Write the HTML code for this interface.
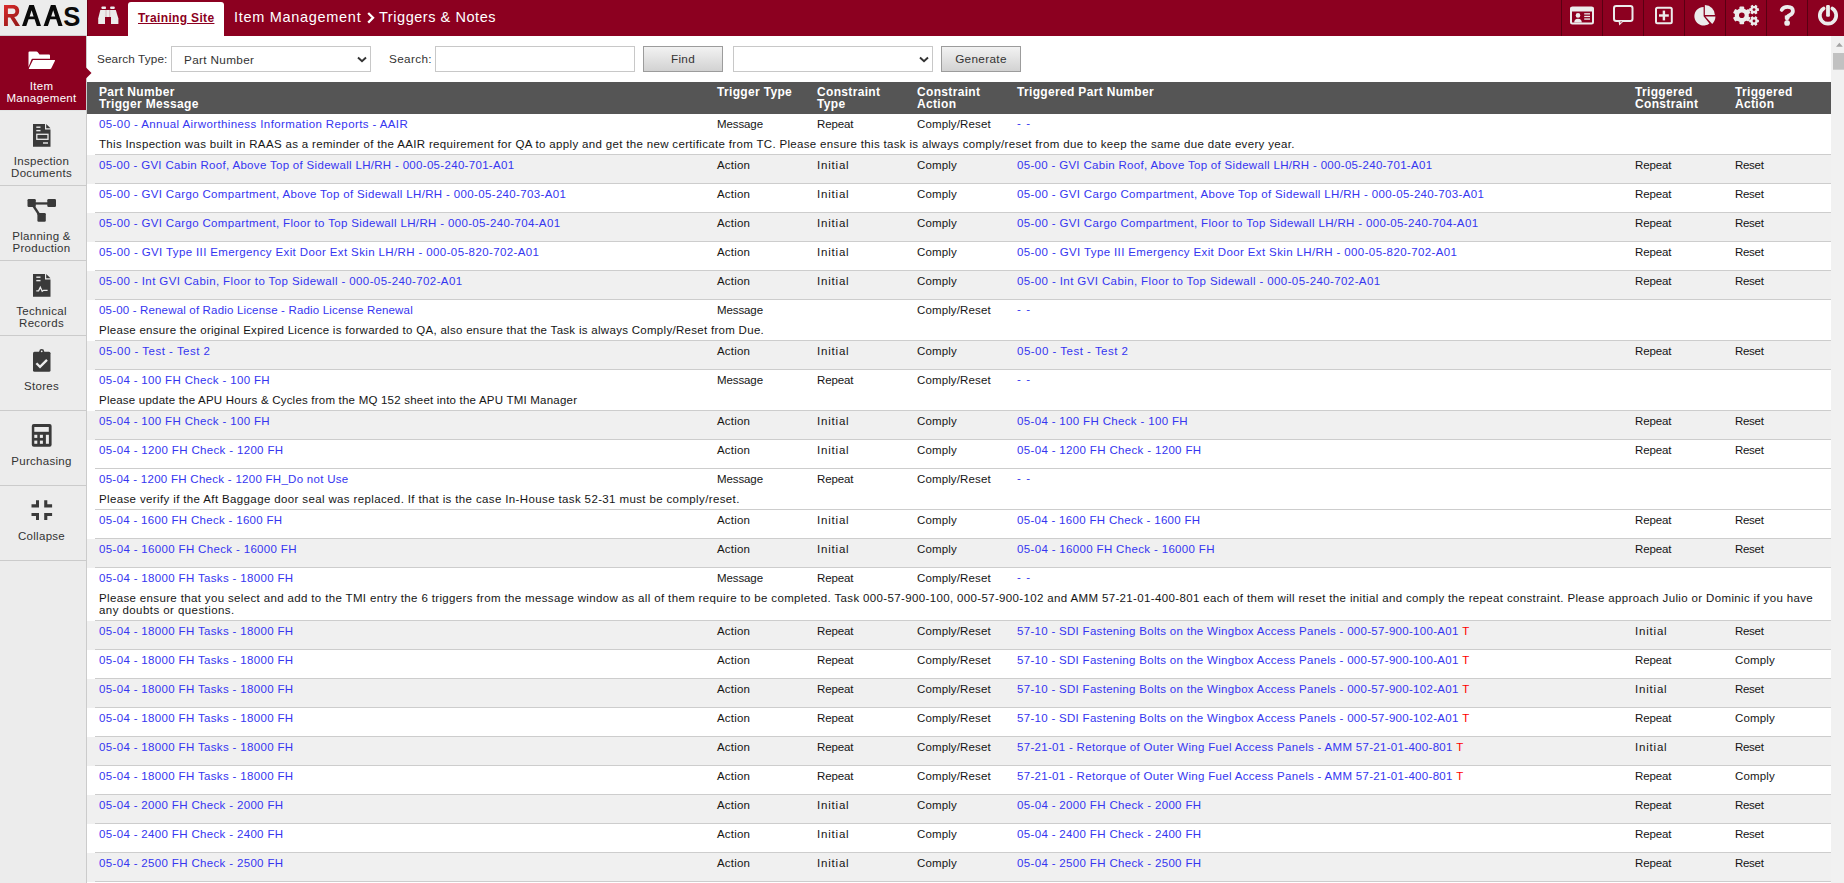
<!DOCTYPE html>
<html><head><meta charset="utf-8"><title>RAAS</title>
<style>
*{box-sizing:border-box;margin:0;padding:0}
html,body{width:1844px;height:883px;overflow:hidden}
body{position:relative;font-family:"Liberation Sans",sans-serif;font-size:11.5px;letter-spacing:0.34px;color:#333;background:#fff}
.hdr{position:absolute;left:0;top:0;width:1844px;height:36px;background:#8c0020}
.logo{position:absolute;left:0;top:0;width:87px;height:36px;background:#ececec;border-bottom:1px solid #cfcfcf}
.tab{position:absolute;left:128px;top:2px;width:96px;height:34px;background:#fff;border-radius:3px 3px 0 0}
.tab span{position:absolute;left:10px;top:9px;font-weight:bold;font-size:12px;color:#8c0020;text-decoration:underline;white-space:nowrap;line-height:14px}
.title{position:absolute;left:234px;top:8px;color:#fff;font-size:14.5px;letter-spacing:0.7px;white-space:nowrap;line-height:18px}
.sep{position:absolute;top:0;width:1px;height:36px;background:#5a0012}
.hi{position:absolute;top:0;height:36px}
.side{position:absolute;left:0;top:36px;width:87px;height:847px;background:#ececec;border-right:1px solid #cbcbcb}
.si{position:absolute;left:0;width:86px;height:75px;border-bottom:1px solid #cbcbcb;text-align:center;color:#333;font-size:11.5px;letter-spacing:0.3px;line-height:12px}
.si.act{background:#8c0020;color:#fff;border-bottom:1px solid #e2e4e4}
.si .lbl{position:absolute;left:-1.5px;width:86px;top:44px}
.si svg{position:absolute;left:0;top:0}
.srch{position:absolute;top:36px;left:87px;width:1744px;height:46px}
.lab{position:absolute;top:52px;font-size:11.75px;color:#333;white-space:nowrap;line-height:14px}
.sel{position:absolute;top:46px;height:26px;background:#fff;border:1px solid #c8c8c8}
.sel span{position:absolute;left:12px;top:6px;font-size:11.75px;color:#333;line-height:14px}
.inp{position:absolute;top:46px;height:26px;background:#fff;border:1px solid #c8c8c8}
.btn{position:absolute;top:46px;height:26px;border:1px solid #9c9c9c;background:linear-gradient(#f2f2f2,#d2d2d2);text-align:center;font-size:11.75px;color:#333;line-height:24px}
.scroll{position:absolute;left:1831px;top:36px;width:13px;height:847px;background:#f1f1f1}
.th{position:absolute;left:87px;top:82px;width:1744px;height:32px;background:#555;color:#fff;font-weight:bold;font-size:12px;letter-spacing:0.33px;line-height:12px}
.th span{position:absolute;top:4px;white-space:nowrap}
.h1{left:12px}.h2{left:630px}.h3{left:730px}.h4{left:830px}.h5{left:930px}.h6{left:1548px}.h7{left:1648px}
.row{position:absolute;left:87px;width:1744px;background:#fff;color:#151515}
.row.g{background:#f0f0f0}
.row::after{content:"";position:absolute;left:8px;right:0;bottom:0;height:1px;background:#cdcdcd}
.row>span,.row>a{position:absolute;top:3px;line-height:14px;white-space:nowrap}
a{color:#3535f0;text-decoration:none}
.c1{left:12px}.c2{left:630px}.c3{left:730px}.c4{left:830px}.c5{left:930px}.c6{left:1548px}.c7{left:1648px}
.rt{color:#f00;font-weight:normal;letter-spacing:0}
.msg{position:absolute;left:12px;top:24px;right:14px;line-height:12px;color:#151515;letter-spacing:0.3px}

</style></head><body>
<div class="hdr"></div>
<div class="logo"><svg width="87" height="36" style="position:absolute;left:0;top:0">
<defs><linearGradient id="rg" x1="0" y1="0" x2="0.6" y2="1"><stop offset="0" stop-color="#da2b2b"/><stop offset="1" stop-color="#9a1b1b"/></linearGradient></defs>
<path fill="url(#rg)" fill-rule="evenodd" d="M4,5 H13 C17,5 19.2,7.6 19.2,11 C19.2,14.3 17.3,16.6 14.3,17.1 L20,26 H15.6 L10.2,17.4 H7.9 V26 H4 Z M7.9,8.5 V13.9 H12.9 C14.6,13.9 15.4,12.7 15.4,11.2 C15.4,9.7 14.6,8.5 12.9,8.5 Z"/>
<path fill="#0a0a0a" fill-rule="evenodd" d="M22,26 L29.3,5 H33.9 L41,26 H36.8 L34.6,19.2 H28.6 L26.3,26 Z M29.6,16.4 H33.6 L31.6,10.3 Z"/>
<path fill="#0a0a0a" fill-rule="evenodd" d="M43.6,26 L50.9,5 H55.5 L62.6,26 H58.4 L56.2,19.2 H50.2 L47.9,26 Z M51.2,16.4 H55.2 L53.2,10.3 Z"/>
<text x="63.2" y="26" font-family="Liberation Sans" font-weight="bold" font-size="28.5" fill="#0a0a0a" transform="translate(63.2,26) scale(0.9,1) translate(-63.2,-26)">S</text>
</svg></div>
<svg width="1844" height="36" style="position:absolute;left:0;top:0">
<g fill="#ececec">
<rect x="101.5" y="6.5" width="4.5" height="2.5" rx="0.8"/>
<rect x="110.2" y="6.5" width="4.5" height="2.5" rx="0.8"/>
<path d="M100.3,10 H105 V24 H98.6 Q98.2,24 98.2,23.4 V18.5 Z"/>
<rect x="104.6" y="10" width="6.8" height="7"/>
<path d="M111,10 H115.8 L118.4,18.5 V23.4 Q118.4,24 118,24 H111 Z"/>
</g>
<rect x="105.6" y="10" width="0.8" height="7" fill="#8c0020" opacity="0.3"/><rect x="109.4" y="10" width="0.8" height="7" fill="#8c0020" opacity="0.3"/>
<g fill="#5a0012">
<rect x="87" y="0" width="1" height="36" fill="#6a0014"/><rect x="1561" y="0" width="1" height="36"/><rect x="1602" y="0" width="1" height="36"/><rect x="1643" y="0" width="1" height="36"/><rect x="1684" y="0" width="1" height="36"/><rect x="1725" y="0" width="1" height="36"/><rect x="1766" y="0" width="1" height="36"/><rect x="1807" y="0" width="1" height="36"/>
</g>
<g fill="#ececec" stroke="none">
<!-- id card -->
<rect x="1571" y="7.5" width="22" height="16" rx="1.5" fill="none" stroke="#ececec" stroke-width="2"/>
<rect x="1570.5" y="7" width="23" height="4.6" rx="1"/>
<circle cx="1578" cy="15.4" r="2.3"/>
<path d="M1574.2,22.6 Q1574.2,18.7 1578,18.7 Q1581.8,18.7 1581.8,22.6 Z"/>
<rect x="1584.2" y="13.2" width="5.8" height="1.3"/><rect x="1584.2" y="15.8" width="5.8" height="1.3"/><rect x="1584.2" y="18.4" width="5.8" height="1.3"/>
<!-- chat -->
<rect x="1614" y="6" width="18.5" height="15" rx="2.2" fill="none" stroke="#ececec" stroke-width="2"/>
<path d="M1618.5,20.5 L1619.2,25.6 L1624.5,20.5 Z"/>
<path d="M1620.3,21.5 L1620.6,23 L1622.2,21.5 Z" fill="#8c0020"/>
<!-- plus -->
<rect x="1656" y="7.7" width="15.8" height="15.6" rx="1.5" fill="none" stroke="#ececec" stroke-width="2"/>
<rect x="1662.7" y="10.6" width="2.4" height="9.8"/><rect x="1659" y="14.3" width="9.8" height="2.4"/>
<!-- pie -->
<path d="M1703.6,16.2 V6.9 A9.3,9.3 0 1 0 1709.4,23.5 Z"/>
<path d="M1704.9,15 V5 A10,10 0 0 1 1714.9,15 Z"/>
<path d="M1705.4,16.6 H1715.4 A10,10 0 0 1 1712.2,23.9 Z"/>
<!-- gears -->
<g transform="translate(1741.8,15.3)">
<circle r="7"/>
<rect x="-2.3" y="-8.9" width="4.6" height="17.8" rx="0.8"/>
<rect x="-2.3" y="-8.9" width="4.6" height="17.8" rx="0.8" transform="rotate(60)"/>
<rect x="-2.3" y="-8.9" width="4.6" height="17.8" rx="0.8" transform="rotate(120)"/>
<circle r="2.8" fill="#8c0020"/>
</g>
<g transform="translate(1754,9.6)">
<circle r="3.7"/>
<rect x="-1.3" y="-4.9" width="2.6" height="9.8" rx="0.5" transform="rotate(30)"/>
<rect x="-1.3" y="-4.9" width="2.6" height="9.8" rx="0.5" transform="rotate(90)"/>
<rect x="-1.3" y="-4.9" width="2.6" height="9.8" rx="0.5" transform="rotate(150)"/>
<circle r="1.4" fill="#8c0020"/>
</g>
<g transform="translate(1754,21)">
<circle r="3.7"/>
<rect x="-1.3" y="-4.9" width="2.6" height="9.8" rx="0.5" transform="rotate(30)"/>
<rect x="-1.3" y="-4.9" width="2.6" height="9.8" rx="0.5" transform="rotate(90)"/>
<rect x="-1.3" y="-4.9" width="2.6" height="9.8" rx="0.5" transform="rotate(150)"/>
<circle r="1.4" fill="#8c0020"/>
</g>
<!-- help -->
<path d="M1781.7,9.9 Q1783.3,6.9 1787.5,6.9 Q1792.9,6.9 1792.9,11 Q1792.9,13.6 1790,15 Q1787,16.4 1787,18.8" fill="none" stroke="#ececec" stroke-width="3.8" stroke-linecap="round"/>
<rect x="1784.8" y="15.5" width="4.6" height="3.3"/>
<circle cx="1787.1" cy="23" r="2.85"/>
<!-- power -->
<path d="M1832.35,8.55 A8.2,8.2 0 1 1 1823.65,8.55" fill="none" stroke="#ececec" stroke-width="3.7" stroke-linecap="round"/>
<rect x="1826.1" y="5" width="3.8" height="11.8" rx="1.2"/>
</g>
</svg>
<div class="tab"><span>Training Site</span></div>
<div class="title" style="left:234px">Item Management</div><svg width="10" height="14" style="position:absolute;left:366px;top:11px"><path d="M2.2,2 L7,6.8 L2.2,11.6" fill="none" stroke="#fff" stroke-width="2.3"/></svg><div class="title" style="left:379px;letter-spacing:0.55px">Triggers &amp; Notes</div>

<div class="side">
<div class="si act" style="top:0"><div class="lbl">Item<br>Management</div></div>
<div class="si" style="top:75px"><div class="lbl">Inspection<br>Documents</div></div>
<div class="si" style="top:150px"><div class="lbl">Planning &amp;<br>Production</div></div>
<div class="si" style="top:225px"><div class="lbl">Technical<br>Records</div></div>
<div class="si" style="top:300px"><div class="lbl">Stores</div></div>
<div class="si" style="top:375px"><div class="lbl">Purchasing</div></div>
<div class="si" style="top:450px"><div class="lbl">Collapse</div></div>
</div>
<svg width="92" height="883" style="position:absolute;left:0;top:0">
<g fill="#fff">
<path d="M29.5,51.5 H36.5 Q37.2,51.5 37.6,52 L39.5,54.5 H49 Q50,54.5 50,55.5 V58.8 H32.5 Q31.8,58.8 31.5,59.5 L28.5,67 V52.5 Q28.5,51.5 29.5,51.5 Z"/>
<path d="M33,60 H54.5 Q55.3,60 55,60.8 L51.3,68.3 Q51,69 50.2,69 H29.3 Q28.6,69 28.9,68.3 Z"/>
</g>
<path d="M86,67.5 L91.5,73 L86,78.5 Z" fill="#8c0020"/>
<g fill="#3a3a3a">
<!-- doc -->
<path d="M33,124 H45 V129.5 H50.5 V146.7 H33 Z"/><path d="M46.2,124 L50.5,128.3 H46.2 Z"/>
<!-- sitemap -->
<rect x="27.5" y="199" width="8.3" height="8" rx="1.2"/><rect x="47.3" y="199" width="8.7" height="8" rx="1.2"/><rect x="37.4" y="213" width="8.4" height="8.7" rx="1.2"/>
<rect x="35" y="202.3" width="13" height="2.3"/>
<path d="M33.5,206 L38.8,214" stroke="#3a3a3a" stroke-width="2.3"/>
<!-- tech doc -->
<path d="M33,274 H45 V279.5 H50.5 V296.7 H33 Z"/><path d="M46.2,274 L50.5,278.3 H46.2 Z"/>
<!-- clipboard -->
<rect x="33" y="351.8" width="17.5" height="20" rx="1.5"/>
<circle cx="41.7" cy="351.3" r="2.4"/>
<!-- calc -->
<rect x="31.8" y="424" width="19.8" height="22.7" rx="2"/>
<!-- collapse -->
<path d="M36,500.3 H39 V507.4 H31.5 V504.3 H36 Z"/>
<path d="M44.2,500.3 H47.3 V504.3 H52.1 V507.4 H44.2 Z"/>
<path d="M31.5,513 H39 V520.1 H36 V516.1 H31.5 Z"/>
<path d="M44.2,513 H52.1 V516.1 H47.3 V520.1 H44.2 Z"/>
</g>
<g fill="#ececec">
<rect x="36.3" y="126.5" width="4.2" height="1.4"/><rect x="36.3" y="129.9" width="4.2" height="1.4"/>
<rect x="36.8" y="134.3" width="11.2" height="5" fill="none" stroke="#ececec" stroke-width="1.3"/>
<rect x="43" y="142.3" width="5" height="1.4"/>
<rect x="36.3" y="276.5" width="4.2" height="1.4"/><rect x="36.3" y="279.9" width="4.2" height="1.4"/>
<path d="M36.3,290.8 H38.6 L40.3,287.3 L42.2,291.3 L43.6,290.3 H47.6" fill="none" stroke="#ececec" stroke-width="1.3"/>
<circle cx="41.7" cy="351.3" r="1.1" fill="#3a3a3a"/>
<circle cx="41.7" cy="351.3" r="0.9"/>
<path d="M36.4,363.3 L40,366.9 L47,359.9" fill="none" stroke="#ececec" stroke-width="2.3"/>
<rect x="34.3" y="427" width="14.5" height="4.8"/>
<rect x="34.3" y="434.8" width="3" height="3.1"/><rect x="39.9" y="434.8" width="3" height="3.1"/>
<rect x="34.3" y="440.6" width="3" height="3.2"/><rect x="39.9" y="440.6" width="3" height="3.2"/>
<rect x="45.9" y="434.8" width="3" height="9"/>
</g>
</svg>

<span class="lab" style="left:97px;letter-spacing:0.12px">Search Type:</span>
<div class="sel" style="left:171px;width:200px"><span>Part Number</span><svg width="12" height="10" style="position:absolute;left:184px;top:8px"><path d="M2,2.5 L6,6.3 L10,2.5" fill="none" stroke="#333" stroke-width="1.9"/></svg></div>
<span class="lab" style="left:389px">Search:</span>
<div class="inp" style="left:435px;width:200px"></div>
<div class="btn" style="left:643px;width:80px">Find</div>
<div class="sel" style="left:733px;width:200px"><svg width="12" height="10" style="position:absolute;left:184px;top:8px"><path d="M2,2.5 L6,6.3 L10,2.5" fill="none" stroke="#333" stroke-width="1.9"/></svg></div>
<div class="btn" style="left:941px;width:80px">Generate</div>

<div class="scroll"><svg width="13" height="40" style="position:absolute;left:0;top:0"><path d="M5,10.8 L8.4,6.8 L11.8,10.8 Z" fill="#a3a3a3"/><rect x="2" y="17" width="11" height="16.7" fill="#c1c1c1"/></svg></div>

<div class="tbl">
<div class="th"><span class="h1">Part Number<br>Trigger Message</span><span class="h2">Trigger Type</span><span class="h3">Constraint<br>Type</span><span class="h4">Constraint<br>Action</span><span class="h5">Triggered Part Number</span><span class="h6">Triggered<br>Constraint</span><span class="h7">Triggered<br>Action</span></div>
<div class="row" style="top:114px;height:41px"><a class="c1" style="letter-spacing:0.403px">05-00 - Annual Airworthiness Information Reports - AAIR</a><span class="c2" style="letter-spacing:-0.1px">Message</span><span class="c3" style="letter-spacing:-0.15px">Repeat</span><span class="c4" style="letter-spacing:0.125px">Comply/Reset</span><span class="c5"><a style="letter-spacing:1.1px;position:relative;top:-0.8px">- -</a></span><span class="c6"></span><span class="c7"></span><div class="msg"><span style="letter-spacing:0.3316px">This Inspection was built in RAAS as a reminder of the AAIR requirement for QA to apply and get the new certificate from TC. Please ensure this task is always comply/reset from due to keep the same due date every year.</span></div></div>
<div class="row g" style="top:155px;height:29px"><a class="c1" style="letter-spacing:0.312px">05-00 - GVI Cabin Roof, Above Top of Sidewall LH/RH - 000-05-240-701-A01</a><span class="c2" style="letter-spacing:0.19px">Action</span><span class="c3" style="letter-spacing:0.8px">Initial</span><span class="c4" style="letter-spacing:0.17px">Comply</span><span class="c5"><a style="letter-spacing:0.312px">05-00 - GVI Cabin Roof, Above Top of Sidewall LH/RH - 000-05-240-701-A01</a></span><span class="c6" style="letter-spacing:-0.15px">Repeat</span><span class="c7" style="letter-spacing:-0.3px">Reset</span></div>
<div class="row" style="top:184px;height:29px"><a class="c1" style="letter-spacing:0.350px">05-00 - GVI Cargo Compartment, Above Top of Sidewall LH/RH - 000-05-240-703-A01</a><span class="c2" style="letter-spacing:0.19px">Action</span><span class="c3" style="letter-spacing:0.8px">Initial</span><span class="c4" style="letter-spacing:0.17px">Comply</span><span class="c5"><a style="letter-spacing:0.350px">05-00 - GVI Cargo Compartment, Above Top of Sidewall LH/RH - 000-05-240-703-A01</a></span><span class="c6" style="letter-spacing:-0.15px">Repeat</span><span class="c7" style="letter-spacing:-0.3px">Reset</span></div>
<div class="row g" style="top:213px;height:29px"><a class="c1" style="letter-spacing:0.349px">05-00 - GVI Cargo Compartment, Floor to Top Sidewall LH/RH - 000-05-240-704-A01</a><span class="c2" style="letter-spacing:0.19px">Action</span><span class="c3" style="letter-spacing:0.8px">Initial</span><span class="c4" style="letter-spacing:0.17px">Comply</span><span class="c5"><a style="letter-spacing:0.349px">05-00 - GVI Cargo Compartment, Floor to Top Sidewall LH/RH - 000-05-240-704-A01</a></span><span class="c6" style="letter-spacing:-0.15px">Repeat</span><span class="c7" style="letter-spacing:-0.3px">Reset</span></div>
<div class="row" style="top:242px;height:29px"><a class="c1" style="letter-spacing:0.380px">05-00 - GVI Type III Emergency Exit Door Ext Skin LH/RH - 000-05-820-702-A01</a><span class="c2" style="letter-spacing:0.19px">Action</span><span class="c3" style="letter-spacing:0.8px">Initial</span><span class="c4" style="letter-spacing:0.17px">Comply</span><span class="c5"><a style="letter-spacing:0.380px">05-00 - GVI Type III Emergency Exit Door Ext Skin LH/RH - 000-05-820-702-A01</a></span><span class="c6" style="letter-spacing:-0.15px">Repeat</span><span class="c7" style="letter-spacing:-0.3px">Reset</span></div>
<div class="row g" style="top:271px;height:29px"><a class="c1" style="letter-spacing:0.393px">05-00 - Int GVI Cabin, Floor to Top Sidewall - 000-05-240-702-A01</a><span class="c2" style="letter-spacing:0.19px">Action</span><span class="c3" style="letter-spacing:0.8px">Initial</span><span class="c4" style="letter-spacing:0.17px">Comply</span><span class="c5"><a style="letter-spacing:0.393px">05-00 - Int GVI Cabin, Floor to Top Sidewall - 000-05-240-702-A01</a></span><span class="c6" style="letter-spacing:-0.15px">Repeat</span><span class="c7" style="letter-spacing:-0.3px">Reset</span></div>
<div class="row" style="top:300px;height:41px"><a class="c1" style="letter-spacing:0.171px">05-00 - Renewal of Radio License - Radio License Renewal</a><span class="c2" style="letter-spacing:-0.1px">Message</span><span class="c3"></span><span class="c4" style="letter-spacing:0.125px">Comply/Reset</span><span class="c5"><a style="letter-spacing:1.1px;position:relative;top:-0.8px">- -</a></span><span class="c6"></span><span class="c7"></span><div class="msg"><span style="letter-spacing:0.295px">Please ensure the original Expired Licence is forwarded to QA, also ensure that the Task is always Comply/Reset from Due.</span></div></div>
<div class="row g" style="top:341px;height:29px"><a class="c1" style="letter-spacing:0.490px">05-00 - Test - Test 2</a><span class="c2" style="letter-spacing:0.19px">Action</span><span class="c3" style="letter-spacing:0.8px">Initial</span><span class="c4" style="letter-spacing:0.17px">Comply</span><span class="c5"><a style="letter-spacing:0.490px">05-00 - Test - Test 2</a></span><span class="c6" style="letter-spacing:-0.15px">Repeat</span><span class="c7" style="letter-spacing:-0.3px">Reset</span></div>
<div class="row" style="top:370px;height:41px"><a class="c1">05-04 - 100 FH Check - 100 FH</a><span class="c2" style="letter-spacing:-0.1px">Message</span><span class="c3" style="letter-spacing:-0.15px">Repeat</span><span class="c4" style="letter-spacing:0.125px">Comply/Reset</span><span class="c5"><a style="letter-spacing:1.1px;position:relative;top:-0.8px">- -</a></span><span class="c6"></span><span class="c7"></span><div class="msg"><span style="letter-spacing:0.211px">Please update the APU Hours &amp; Cycles from the MQ 152 sheet into the APU TMI Manager</span></div></div>
<div class="row g" style="top:411px;height:29px"><a class="c1">05-04 - 100 FH Check - 100 FH</a><span class="c2" style="letter-spacing:0.19px">Action</span><span class="c3" style="letter-spacing:0.8px">Initial</span><span class="c4" style="letter-spacing:0.17px">Comply</span><span class="c5"><a>05-04 - 100 FH Check - 100 FH</a></span><span class="c6" style="letter-spacing:-0.15px">Repeat</span><span class="c7" style="letter-spacing:-0.3px">Reset</span></div>
<div class="row" style="top:440px;height:29px"><a class="c1">05-04 - 1200 FH Check - 1200 FH</a><span class="c2" style="letter-spacing:0.19px">Action</span><span class="c3" style="letter-spacing:0.8px">Initial</span><span class="c4" style="letter-spacing:0.17px">Comply</span><span class="c5"><a>05-04 - 1200 FH Check - 1200 FH</a></span><span class="c6" style="letter-spacing:-0.15px">Repeat</span><span class="c7" style="letter-spacing:-0.3px">Reset</span></div>
<div class="row" style="top:469px;height:41px"><a class="c1" style="letter-spacing:0.277px">05-04 - 1200 FH Check - 1200 FH_Do not Use</a><span class="c2" style="letter-spacing:-0.1px">Message</span><span class="c3" style="letter-spacing:-0.15px">Repeat</span><span class="c4" style="letter-spacing:0.125px">Comply/Reset</span><span class="c5"><a style="letter-spacing:1.1px;position:relative;top:-0.8px">- -</a></span><span class="c6"></span><span class="c7"></span><div class="msg"><span style="letter-spacing:0.37px">Please verify if the Aft Baggage door seal was replaced. If that is the case In-House task 52-31 must be comply/reset.</span></div></div>
<div class="row" style="top:510px;height:29px"><a class="c1" style="letter-spacing:0.310px">05-04 - 1600 FH Check - 1600 FH</a><span class="c2" style="letter-spacing:0.19px">Action</span><span class="c3" style="letter-spacing:0.8px">Initial</span><span class="c4" style="letter-spacing:0.17px">Comply</span><span class="c5"><a style="letter-spacing:0.310px">05-04 - 1600 FH Check - 1600 FH</a></span><span class="c6" style="letter-spacing:-0.15px">Repeat</span><span class="c7" style="letter-spacing:-0.3px">Reset</span></div>
<div class="row g" style="top:539px;height:29px"><a class="c1">05-04 - 16000 FH Check - 16000 FH</a><span class="c2" style="letter-spacing:0.19px">Action</span><span class="c3" style="letter-spacing:0.8px">Initial</span><span class="c4" style="letter-spacing:0.17px">Comply</span><span class="c5"><a>05-04 - 16000 FH Check - 16000 FH</a></span><span class="c6" style="letter-spacing:-0.15px">Repeat</span><span class="c7" style="letter-spacing:-0.3px">Reset</span></div>
<div class="row" style="top:568px;height:53px"><a class="c1">05-04 - 18000 FH Tasks - 18000 FH</a><span class="c2" style="letter-spacing:-0.1px">Message</span><span class="c3" style="letter-spacing:-0.15px">Repeat</span><span class="c4" style="letter-spacing:0.125px">Comply/Reset</span><span class="c5"><a style="letter-spacing:1.1px;position:relative;top:-0.8px">- -</a></span><span class="c6"></span><span class="c7"></span><div class="msg"><span style="letter-spacing:0.354px">Please ensure that you select and add to the TMI entry the 6 triggers from the message window as all of them require to be completed. Task 000-57-900-100, 000-57-900-102 and AMM 57-21-01-400-801 each of them will reset the initial and comply the repeat constraint. Please approach Julio or Dominic if you have</span><br><span style="letter-spacing:0.43px">any doubts or questions.</span></div></div>
<div class="row g" style="top:621px;height:29px"><a class="c1">05-04 - 18000 FH Tasks - 18000 FH</a><span class="c2" style="letter-spacing:0.19px">Action</span><span class="c3" style="letter-spacing:-0.15px">Repeat</span><span class="c4" style="letter-spacing:0.125px">Comply/Reset</span><span class="c5"><a style="letter-spacing:0.298px">57-10 - SDI Fastening Bolts on the Wingbox Access Panels - 000-57-900-100-A01</a> <b class="rt">T</b></span><span class="c6" style="letter-spacing:0.8px">Initial</span><span class="c7" style="letter-spacing:-0.3px">Reset</span></div>
<div class="row" style="top:650px;height:29px"><a class="c1">05-04 - 18000 FH Tasks - 18000 FH</a><span class="c2" style="letter-spacing:0.19px">Action</span><span class="c3" style="letter-spacing:-0.15px">Repeat</span><span class="c4" style="letter-spacing:0.125px">Comply/Reset</span><span class="c5"><a style="letter-spacing:0.298px">57-10 - SDI Fastening Bolts on the Wingbox Access Panels - 000-57-900-100-A01</a> <b class="rt">T</b></span><span class="c6" style="letter-spacing:-0.15px">Repeat</span><span class="c7" style="letter-spacing:0.17px">Comply</span></div>
<div class="row g" style="top:679px;height:29px"><a class="c1">05-04 - 18000 FH Tasks - 18000 FH</a><span class="c2" style="letter-spacing:0.19px">Action</span><span class="c3" style="letter-spacing:-0.15px">Repeat</span><span class="c4" style="letter-spacing:0.125px">Comply/Reset</span><span class="c5"><a style="letter-spacing:0.298px">57-10 - SDI Fastening Bolts on the Wingbox Access Panels - 000-57-900-102-A01</a> <b class="rt">T</b></span><span class="c6" style="letter-spacing:0.8px">Initial</span><span class="c7" style="letter-spacing:-0.3px">Reset</span></div>
<div class="row" style="top:708px;height:29px"><a class="c1">05-04 - 18000 FH Tasks - 18000 FH</a><span class="c2" style="letter-spacing:0.19px">Action</span><span class="c3" style="letter-spacing:-0.15px">Repeat</span><span class="c4" style="letter-spacing:0.125px">Comply/Reset</span><span class="c5"><a style="letter-spacing:0.298px">57-10 - SDI Fastening Bolts on the Wingbox Access Panels - 000-57-900-102-A01</a> <b class="rt">T</b></span><span class="c6" style="letter-spacing:-0.15px">Repeat</span><span class="c7" style="letter-spacing:0.17px">Comply</span></div>
<div class="row g" style="top:737px;height:29px"><a class="c1">05-04 - 18000 FH Tasks - 18000 FH</a><span class="c2" style="letter-spacing:0.19px">Action</span><span class="c3" style="letter-spacing:-0.15px">Repeat</span><span class="c4" style="letter-spacing:0.125px">Comply/Reset</span><span class="c5"><a style="letter-spacing:0.304px">57-21-01 - Retorque of Outer Wing Fuel Access Panels - AMM 57-21-01-400-801</a> <b class="rt">T</b></span><span class="c6" style="letter-spacing:0.8px">Initial</span><span class="c7" style="letter-spacing:-0.3px">Reset</span></div>
<div class="row" style="top:766px;height:29px"><a class="c1">05-04 - 18000 FH Tasks - 18000 FH</a><span class="c2" style="letter-spacing:0.19px">Action</span><span class="c3" style="letter-spacing:-0.15px">Repeat</span><span class="c4" style="letter-spacing:0.125px">Comply/Reset</span><span class="c5"><a style="letter-spacing:0.304px">57-21-01 - Retorque of Outer Wing Fuel Access Panels - AMM 57-21-01-400-801</a> <b class="rt">T</b></span><span class="c6" style="letter-spacing:-0.15px">Repeat</span><span class="c7" style="letter-spacing:0.17px">Comply</span></div>
<div class="row g" style="top:795px;height:29px"><a class="c1">05-04 - 2000 FH Check - 2000 FH</a><span class="c2" style="letter-spacing:0.19px">Action</span><span class="c3" style="letter-spacing:0.8px">Initial</span><span class="c4" style="letter-spacing:0.17px">Comply</span><span class="c5"><a>05-04 - 2000 FH Check - 2000 FH</a></span><span class="c6" style="letter-spacing:-0.15px">Repeat</span><span class="c7" style="letter-spacing:-0.3px">Reset</span></div>
<div class="row" style="top:824px;height:29px"><a class="c1">05-04 - 2400 FH Check - 2400 FH</a><span class="c2" style="letter-spacing:0.19px">Action</span><span class="c3" style="letter-spacing:0.8px">Initial</span><span class="c4" style="letter-spacing:0.17px">Comply</span><span class="c5"><a>05-04 - 2400 FH Check - 2400 FH</a></span><span class="c6" style="letter-spacing:-0.15px">Repeat</span><span class="c7" style="letter-spacing:-0.3px">Reset</span></div>
<div class="row g" style="top:853px;height:29px"><a class="c1">05-04 - 2500 FH Check - 2500 FH</a><span class="c2" style="letter-spacing:0.19px">Action</span><span class="c3" style="letter-spacing:0.8px">Initial</span><span class="c4" style="letter-spacing:0.17px">Comply</span><span class="c5"><a>05-04 - 2500 FH Check - 2500 FH</a></span><span class="c6" style="letter-spacing:-0.15px">Repeat</span><span class="c7" style="letter-spacing:-0.3px">Reset</span></div>
</div>
</body></html>
